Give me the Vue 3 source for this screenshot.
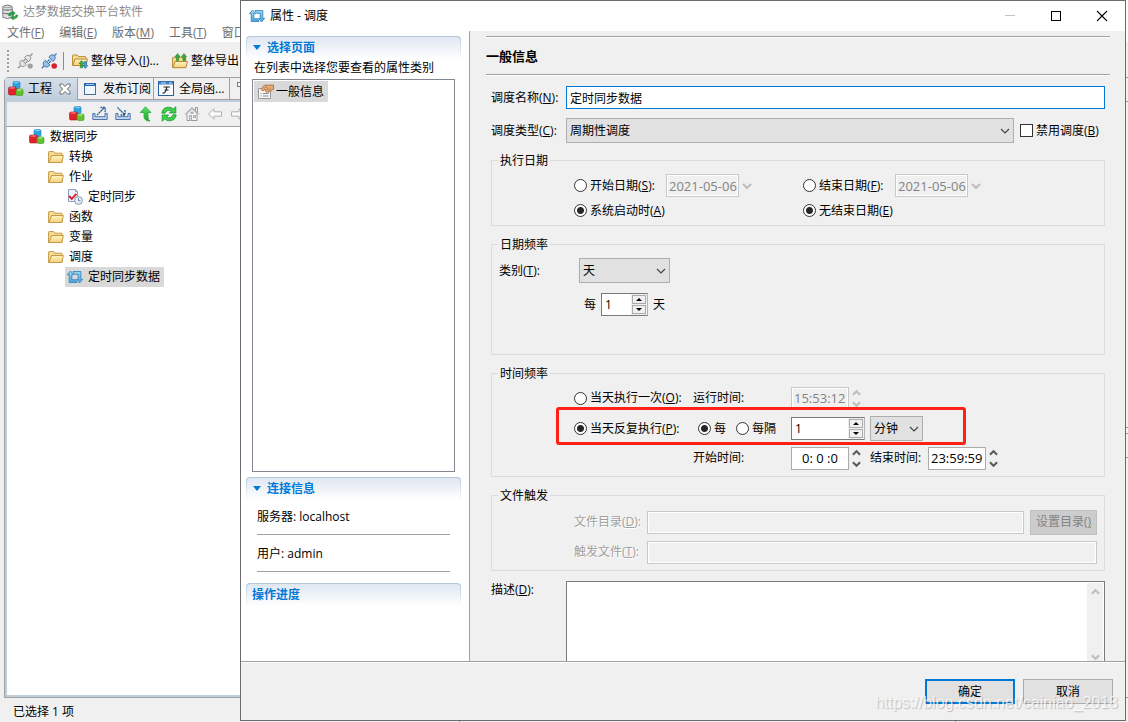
<script setup>
import { ref } from 'vue'

const menus = [
  ['文件', 'F'],
  ['编辑', 'E'],
  ['版本', 'M'],
  ['工具', 'T'],
  ['窗口', 'W'],
]

const tree = [
  { label: '数据同步', icon: 'cubes', level: 0 },
  { label: '转换', icon: 'folder', level: 1 },
  { label: '作业', icon: 'folder', level: 1 },
  { label: '定时同步', icon: 'job', level: 2 },
  { label: '函数', icon: 'folder', level: 1 },
  { label: '变量', icon: 'folder', level: 1 },
  { label: '调度', icon: 'folder', level: 1 },
  { label: '定时同步数据', icon: 'schedule', level: 2, selected: true },
]

const viewTools = [
  ['cubes', '工程'],
  ['export', '导出'],
  ['import', '导入'],
  ['up', '向上'],
  ['refresh', '刷新'],
  ['home', '主页'],
  ['back', '后退'],
  ['forward', '前进'],
]

const name = ref('定时同步数据')
const startMode = ref('boot')
const endMode = ref('never')
const runMode = ref('repeat')
const everyMode = ref('every')
const dayStep = ref('1')
const timeStep = ref('1')
</script>

<template>
  <svg class="defs" aria-hidden="true">
    <defs>
      <linearGradient id="gFolder" x1="0" y1="0" x2="0" y2="1">
        <stop offset="0" stop-color="#fdf3c4" /><stop offset="1" stop-color="#f2d27c" />
      </linearGradient>
      <linearGradient id="gBlue" x1="0" y1="0" x2="0" y2="1">
        <stop offset="0" stop-color="#9ad8f5" /><stop offset="1" stop-color="#4aa3dc" />
      </linearGradient>
      <linearGradient id="gGreen" x1="0" y1="0" x2="0" y2="1">
        <stop offset="0" stop-color="#63e06c" /><stop offset="1" stop-color="#17a52c" />
      </linearGradient>
    </defs>
    <symbol id="cubes" viewBox="0 0 16 16">
      <rect x="5" y=".5" width="7" height="7" rx="1.5" fill="#2ba3df" stroke="#1c7fb8" stroke-width=".6" />
      <path d="M5.6 2.1 7 .8h4L10 2.3z" fill="#7fd0f3" />
      <rect x=".5" y="6" width="8" height="8" rx="1.5" fill="#e3212b" stroke="#a8121c" stroke-width=".6" />
      <path d="M1.2 7.500 2.600 6.300h4.600L6.200 7.800z" fill="#f7777c" />
      <rect x="8" y="8" width="7" height="6.500" rx="1.500" fill="#62c22e" stroke="#3f8f1c" stroke-width=".6" />
      <path d="M8.700 9.500 9.900 8.300h4L12.900 9.700z" fill="#b0e886" />
    </symbol>
    <symbol id="folder" viewBox="0 0 16 16">
      <path d="M.6 13.500V3.200q0-.7.700-.7h4.200l1.300 1.700h6.600q.7 0 .7.700v8.600z" fill="#f6dc92" stroke="#c49a45" />
      <path d="M1 13.500 3.500 6.500h11.900l-1.700 7z" fill="url(#gFolder)" stroke="#c49a45" stroke-linejoin="round" />
    </symbol>
    <symbol id="job" viewBox="0 0 16 16">
      <path d="M1.500.5h7l2 2v10h-9z" fill="#eef3fb" stroke="#8b9cc0" />
      <path d="M8.500.5v2h2" fill="#cfd9ee" stroke="#8b9cc0" />
      <path d="M2 7 4.800 9.800 9.300 4.800" fill="none" stroke="#e01f26" stroke-width="2" />
      <circle cx="11.500" cy="11.500" r="3.900" fill="#e8eef8" stroke="#8498ba" />
      <path d="M11.500 9.200v2.500h2" fill="none" stroke="#6e83a8" />
    </symbol>
    <symbol id="schedule" viewBox="0 0 16 16">
      <path d="M3.500 2 6.700 5.700H4.800v5H8.500L10 13.500H2.200V5.700H.3z" fill="url(#gBlue)" stroke="#2a80bd" stroke-width=".8" stroke-linejoin="round" />
      <path d="M12.500 14 9.300 10.300h1.900v-5H7.500L6 2.500h7.800v7.800h1.900z" fill="url(#gBlue)" stroke="#2a80bd" stroke-width=".8" stroke-linejoin="round" />
    </symbol>
    <symbol id="export" viewBox="0 0 16 16">
      <path d="M3 7.500H.8v6h14.400v-6H13v3.200H3z" fill="#c3d6ee" stroke="#4d73ab" />
      <path d="M5 9 12.500 1.500M8.500 1.500h4.700v4.700" fill="none" stroke="#2b5f98" stroke-width="1.300" stroke-dasharray="2 .5" />
    </symbol>
    <symbol id="import" viewBox="0 0 16 16">
      <path d="M3 7.500H.8v6h14.400v-6H13v3.200H3z" fill="#c3d6ee" stroke="#4d73ab" />
      <path d="M2.500 1.500 9.500 8.500M10 4v5H5" fill="none" stroke="#2b5f98" stroke-width="1.300" stroke-dasharray="2 .5" />
    </symbol>
    <symbol id="up" viewBox="0 0 16 16">
      <path d="M7.500.8 13 6.500h-3v5q0 2 2 3.600-6-.2-6-4.600v-4H2.200z" fill="url(#gGreen)" stroke="#22ab38" stroke-width=".8" />
    </symbol>
    <symbol id="refresh" viewBox="0 0 16 16">
      <path d="M.8 7.200Q1.500 1.400 7.500 1.200q3 0 4.800 1.800L14.800.8V7H8.400l2-2Q8.600 3.700 6.600 4.500 5 5.200 4 7.200z" fill="#3ed04c" stroke="#16992b" stroke-width=".8" />
      <path d="M15.200 8.800Q14.500 14.600 8.500 14.800q-3 0-4.800-1.800L1.200 15.200V9h6.400l-2 2q1.800 1.300 3.800.5 1.600-.7 2.600-2.700z" fill="#3ed04c" stroke="#16992b" stroke-width=".8" />
    </symbol>
    <symbol id="home" viewBox="0 0 16 16">
      <path d="M3 7.500v7h10v-7L8 2.500z" fill="#f4f4f4" stroke="#9a9a9a" />
      <path d="M1 8.500 8 1.500l7 7M11.500 4.500V1.500h2v5" fill="none" stroke="#9a9a9a" />
      <path d="M5.500 14.500v-5h2v5M9.500 9.500h2v2h-2zM7 6h2v1.500H7z" fill="#ddd" stroke="#9a9a9a" stroke-width=".8" />
    </symbol>
    <symbol id="back" viewBox="0 0 16 16">
      <path d="M1.500 8 7 2.800v3h7.500v4.400H7v3z" fill="#fafafa" stroke="#b0b0b0" stroke-linejoin="round" />
    </symbol>
    <symbol id="forward" viewBox="0 0 16 16">
      <path d="M14.500 8 9 2.800v3H1.500v4.400H9v3z" fill="#fafafa" stroke="#b0b0b0" stroke-linejoin="round" />
    </symbol>
    <symbol id="plugOff" viewBox="0 0 16 16">
      <path d="M.8 15.200 3.500 12.500M12.500 3.500 15.600.5M6.500 8 8.500 6M8.500 10l2-2" stroke="#929292" stroke-width="1.300" />
      <path d="M3 8.500 4.800 7 9.300 11.500 7.800 13q-2.200 1.300-3.900-.2T3 8.500zM7.500 4.500 9.300 2.800q2.100-1.200 3.700.3t.2 3.900L11.700 8.700z" fill="#e4e4e4" stroke="#929292" />
      <circle cx="13.200" cy="13" r="2.600" fill="#a0a0a0" />
    </symbol>
    <symbol id="plugOn" viewBox="0 0 16 16">
      <path d="M.8 15.200 3 13M13 3 15.600.5M6.500 8.500l2-2M8 10l2-2" stroke="#4b79b8" stroke-width="1.400" />
      <path d="M2.500 9 4.300 7.300 9 12l-1.800 1.600q-2.200 1.300-3.900-.4T2.500 9zM7.800 4 9.600 2.300q2.100-1.200 3.800.4t.3 3.900L12 8.400z" fill="#9cbfe8" stroke="#4b79b8" />
      <circle cx="13.200" cy="13" r="2.800" fill="#d81e2c" />
    </symbol>
    <symbol id="folderIn" viewBox="0 0 16 16">
      <path d="M.6 12.500V2.700q0-.7.700-.7h3.800l1.300 1.600h6.800q.7 0 .7.700V12z" fill="#f6dc92" stroke="#b98b32" />
      <path d="M1 12.500 3 6h12.500l-1.700 6.500z" fill="url(#gFolder)" stroke="#b98b32" stroke-linejoin="round" />
      <path d="m9.500 7.500 2.500 3h-1.300v4.300H8.300v-4.300H7z" fill="#3fae3c" stroke="#1e7d25" stroke-width=".6" />
      <path d="m13.300 15.500 2.500-3h-1.300V8.500h-2.200v4H11z" fill="#4d9be0" stroke="#1d63ab" stroke-width=".6" />
    </symbol>
    <symbol id="folderOut" viewBox="0 0 16 16">
      <path d="M.6 14.500V5q0-.7.700-.7h12.400v10.200z" fill="#f6dc92" stroke="#b98b32" />
      <path d="M1 14.700 3 8.500h12.500l-1.700 6.200z" fill="url(#gFolder)" stroke="#b98b32" stroke-linejoin="round" />
      <path d="M5.500.6 8 3.800H6.600v3.700H4.400V3.800H3z" fill="#3fae3c" stroke="#1e7d25" stroke-width=".6" />
      <path d="m12 .6 2.500 3.200h-1.400v3.700h-2.200V3.800H9.500z" fill="#3fae3c" stroke="#1e7d25" stroke-width=".6" />
    </symbol>
    <symbol id="appIcon" viewBox="0 0 16 16">
      <path d="M.8 2.500Q5.500-.5 10.200 2.500v10.800q-4.700 2.500-9.400 0z" fill="#dfe1e2" stroke="#74797c" />
      <path d="M1 5.500q4.500 1.500 9 0M1 9q4.500 1.500 9 0" fill="none" stroke="#74797c" stroke-width="1.300" />
      <path d="M2 3.200q3.500 1 7 0" fill="none" stroke="#9da1a3" />
      <path d="M6.500 11.500q.3-3.200 4-3.200V6.800L13.300 9.300 10.500 11.700v-1.400q-2 0-2.200 1.800z" fill="#2aa845" stroke="#137b2a" stroke-width=".5" />
      <path d="M15.700 11q0 3.700-4.200 3.800V16L8.700 13.800 11.500 11.600v1.300q2.200 0 2.400-1.900z" fill="#2aa845" stroke="#137b2a" stroke-width=".5" />
    </symbol>
    <symbol id="windowIcon" viewBox="0 0 16 16">
      <rect x="2.500" y="2.500" width="11" height="11" fill="#eef7fd" stroke="#4a6d94" />
      <path d="M2 3.500h12" stroke="#2f68a8" stroke-width="3" />
      <path d="M4 3.500h8" stroke="#8fc2ec" />
    </symbol>
    <symbol id="fnIcon" viewBox="0 0 16 16">
      <rect x=".5" y=".5" width="15" height="14" fill="#f7fafd" stroke="#2d5f98" />
      <path d="M1 2h14" stroke="#4382c0" stroke-width="3" />
      <path d="M3 2h5M11 2h3" stroke="#bfe0f7" />
      <path d="M5.500 6h6.500M8.800 6Q8 12.500 4.500 12M6.500 9h4" fill="none" stroke="#222" stroke-width="1.200" />
    </symbol>
    <symbol id="tabX" viewBox="0 0 12 12">
      <path d="M1 1h2.600L6 3.500 8.400 1H11v2.200L8.400 6 11 8.800V11H8.400L6 8.500 3.600 11H1V8.800L3.600 6 1 3.200z" fill="#fff" stroke="#6b6b6b" />
    </symbol>
    <symbol id="hand" viewBox="0 0 16 16">
      <path d="M.5 4.500h12v10H.5z" fill="#f8f8f8" stroke="#9a9a9a" />
      <path d="M2.500 9.500h1M5 9.500h5.500M2.500 12h1M5 12h5.500" stroke="#7b8796" />
      <path d="M3.200 5.500 6.300 1.200H10L15.500 1v4.300L12.800 6.500 11 8.500 9.500 7.800 8.200 8.200 7 5.500 4.500 7z" fill="#e5ae79" stroke="#a5662f" stroke-width=".8" />
      <path d="M6.500 4.300 9 2.500M8.500 6 11 3.500M10.500 7l2-2.500" fill="none" stroke="#a5662f" stroke-width=".8" />
    </symbol>
    <symbol id="chevron" viewBox="0 0 10 10">
      <path d="M1 3 5 7 9 3" fill="none" stroke="currentColor" stroke-width="1.200" />
    </symbol>
    <symbol id="chevDown" viewBox="0 0 10 8">
      <path d="M1 2 5 6 9 2" fill="none" stroke="currentColor" stroke-width="2.200" />
    </symbol>
    <symbol id="chevUp" viewBox="0 0 10 8">
      <path d="M1 6 5 2 9 6" fill="none" stroke="currentColor" stroke-width="2.200" />
    </symbol>
  </svg>

  <div class="desktop">
    <div class="workbench">
      <header class="app-title">
        <svg class="ico"><use href="#appIcon" /></svg>
        <span>达梦数据交换平台软件</span>
      </header>
      <nav class="menubar">
        <button v-for="m in menus" :key="m[1]" type="button">{{ m[0] }}(<u>{{ m[1] }}</u>)</button>
      </nav>
      <div class="toolbar">
        <span class="grip"></span>
        <button type="button" aria-label="断开"><svg class="ico"><use href="#plugOff" /></svg></button>
        <button type="button" aria-label="连接"><svg class="ico"><use href="#plugOn" /></svg></button>
        <span class="sep"></span>
        <button type="button" class="wide"><svg class="ico"><use href="#folderIn" /></svg><span>整体导入(<u>I</u>)...</span></button>
        <button type="button"><svg class="ico"><use href="#folderOut" /></svg>整体导出</button>
      </div>

      <div class="panes">
        <section class="view">
          <div class="tabs">
            <button type="button" class="tab active">
              <svg class="ico"><use href="#cubes" /></svg>工程<svg class="close"><use href="#tabX" /></svg>
            </button>
            <button type="button" class="tab"><svg class="ico"><use href="#windowIcon" /></svg>发布订阅</button>
            <button type="button" class="tab"><svg class="ico"><use href="#fnIcon" /></svg>全局函...</button>
            <span class="view-menu"></span>
          </div>
          <div class="view-tools">
            <button v-for="t in viewTools" :key="t[0]" type="button" :aria-label="t[1]">
              <svg class="ico"><use :href="'#' + t[0]" /></svg>
            </button>
          </div>
          <ul class="tree">
            <li v-for="n in tree" :key="n.label" :class="['level' + n.level, { selected: n.selected }]">
              <span class="node"><svg class="ico"><use :href="'#' + n.icon" /></svg>{{ n.label }}</span>
            </li>
          </ul>
        </section>
        <div class="editors">
          <div class="editor-top"></div>
          <div class="editor-bottom"></div>
        </div>
      </div>

      <footer class="status">
        <span>已选择 1 项</span>
        <span></span>
        <span></span>
      </footer>
    </div>

    <div class="dialog" role="dialog" aria-labelledby="dlg-title">
      <header class="dlg-title">
        <svg class="ico"><use href="#schedule" /></svg>
        <span id="dlg-title">属性 - 调度</span>
        <div class="win-buttons">
          <button type="button" aria-label="最小化" disabled><svg viewBox="0 0 12 12"><path d="M1 5.500h10" stroke="#c4c4c4" /></svg></button>
          <button type="button" aria-label="最大化"><svg viewBox="0 0 12 12"><rect x="1.500" y="1.500" width="9" height="9" fill="none" stroke="#000" /></svg></button>
          <button type="button" aria-label="关闭"><svg viewBox="0 0 12 12"><path d="M1 1 11 11M11 1 1 11" stroke="#000" stroke-width="1.100" /></svg></button>
        </div>
      </header>

      <div class="dlg-body">
        <aside class="side">
          <h2><i class="tri"></i>选择页面</h2>
          <p class="hint">在列表中选择您要查看的属性类别</p>
          <ul class="pages">
            <li><svg class="ico"><use href="#hand" /></svg>一般信息</li>
          </ul>
          <h2><i class="tri"></i>连接信息</h2>
          <p class="info">服务器: localhost</p>
          <p class="info">用户: admin</p>
          <h2 class="last">操作进度</h2>
        </aside>

        <main class="page">
          <h1>一般信息</h1>
          <div class="form">
            <div class="line">
              <label for="f-name" class="cap">调度名称(<u>N</u>):</label>
              <input id="f-name" v-model="name" type="text" class="name-box" />
            </div>
            <div class="line type-line">
              <label for="f-type" class="cap">调度类型(<u>C</u>):</label>
              <span class="pick grow">
                <select id="f-type"><option>周期性调度</option></select>
                <svg><use href="#chevron" /></svg>
              </span>
              <label class="opt check"><input type="checkbox" /><span>禁用调度(<u>B</u>)</span></label>
            </div>

            <fieldset class="g-date">
              <legend>执行日期</legend>
              <div class="date-grid">
                <div class="cell">
                  <label class="opt"><input v-model="startMode" type="radio" value="date" name="start" /><span>开始日期(<u>S</u>):</span></label>
                  <input type="text" class="field off date" value="2021-05-06" aria-label="开始日期" disabled />
                  <svg class="drop"><use href="#chevDown" /></svg>
                </div>
                <div class="cell">
                  <label class="opt"><input v-model="endMode" type="radio" value="date" name="end" /><span>结束日期(<u>F</u>):</span></label>
                  <input type="text" class="field off date" value="2021-05-06" aria-label="结束日期" disabled />
                  <svg class="drop"><use href="#chevDown" /></svg>
                </div>
                <div class="cell">
                  <label class="opt"><input v-model="startMode" type="radio" value="boot" name="start" /><span>系统启动时(<u>A</u>)</span></label>
                </div>
                <div class="cell">
                  <label class="opt"><input v-model="endMode" type="radio" value="never" name="end" /><span>无结束日期(<u>E</u>)</span></label>
                </div>
              </div>
            </fieldset>

            <fieldset class="g-day">
              <legend>日期频率</legend>
              <div class="day-line">
                <label for="f-kind">类别(<u>T</u>):</label>
                <span class="pick kind">
                  <select id="f-kind"><option>天</option></select>
                  <svg><use href="#chevron" /></svg>
                </span>
              </div>
              <div class="step-line">
                <label for="f-step">每</label>
                <span class="spin">
                  <input id="f-step" v-model="dayStep" type="text" />
                  <span class="arrows"><button type="button" aria-label="增加"><i class="au"></i></button><button type="button" aria-label="减少"><i class="ad"></i></button></span>
                </span>
                <span>天</span>
              </div>
            </fieldset>

            <fieldset class="g-time">
              <legend>时间频率</legend>
              <div class="time-rows">
                <div class="time-row">
                  <label class="opt"><input v-model="runMode" type="radio" value="once" name="run" /><span>当天执行一次(<u>O</u>):</span></label>
                  <label for="f-run">运行时间:</label>
                  <span class="clock off">
                    <input id="f-run" type="text" class="field off" value="15:53:12" disabled />
                    <span class="updown"><svg><use href="#chevUp" /></svg><svg><use href="#chevDown" /></svg></span>
                  </span>
                </div>
                <div class="time-row">
                  <label class="opt"><input v-model="runMode" type="radio" value="repeat" name="run" /><span>当天反复执行(<u>P</u>):</span></label>
                  <span class="every">
                    <label class="opt"><input v-model="everyMode" type="radio" value="every" name="every" />每</label>
                    <label class="opt"><input v-model="everyMode" type="radio" value="gap" name="every" />每隔</label>
                  </span>
                  <span class="spin long">
                    <input v-model="timeStep" type="text" aria-label="间隔" />
                    <span class="arrows"><button type="button" aria-label="增加"><i class="au"></i></button><button type="button" aria-label="减少"><i class="ad"></i></button></span>
                  </span>
                  <span class="pick unit">
                    <select aria-label="单位"><option>分钟</option></select>
                    <svg><use href="#chevron" /></svg>
                  </span>
                  <span class="mark"></span>
                </div>
                <div class="time-row">
                  <span></span>
                  <label for="f-from">开始时间:</label>
                  <span class="clock">
                    <input id="f-from" type="text" class="field mid" value="0: 0 :0" />
                    <span class="updown"><svg><use href="#chevUp" /></svg><svg><use href="#chevDown" /></svg></span>
                  </span>
                  <span class="clock">
                    <label for="f-to">结束时间:</label>
                    <input id="f-to" type="text" class="field" value="23:59:59" />
                    <span class="updown"><svg><use href="#chevUp" /></svg><svg><use href="#chevDown" /></svg></span>
                  </span>
                </div>
              </div>
            </fieldset>

            <fieldset class="g-file">
              <legend>文件触发</legend>
              <div class="file-rows">
                <div class="file-row">
                  <label for="f-dir">文件目录(<u>D</u>):</label>
                  <input id="f-dir" type="text" class="field off" disabled />
                  <button type="button" class="set-dir" disabled>设置目录(<u>)</u></button>
                </div>
                <div class="file-row">
                  <label for="f-file">触发文件(<u>T</u>):</label>
                  <input id="f-file" type="text" class="field off" disabled />
                </div>
              </div>
            </fieldset>

            <div class="line desc">
              <label for="f-desc" class="cap">描述(<u>D</u>):</label>
              <div class="memo">
                <textarea id="f-desc"></textarea>
                <div class="bar"><svg><use href="#chevUp" /></svg><svg><use href="#chevDown" /></svg></div>
              </div>
            </div>
          </div>
        </main>
      </div>

      <footer class="dlg-foot">
        <button type="button" class="ok">确定</button>
        <button type="button">取消</button>
      </footer>
    </div>

    <div class="watermark">https://blog.csdn.net/cainiao_2018</div>
  </div>
</template>

<style>
html,
body {
  margin: 0;
  height: 100%;
  overflow: hidden;
}
</style>

<style scoped>
* {
  box-sizing: border-box;
}
.defs {
  position: absolute;
  width: 0;
  height: 0;
}
.desktop {
  position: relative;
  height: 100vh;
  overflow: hidden;
  background: #f0f0f0;
  color: #000;
  font: 12px/16px "Open Sans", "Noto Sans CJK SC", sans-serif;
  white-space: nowrap;
}
button,
input,
select,
textarea {
  font: inherit;
  color: inherit;
  margin: 0;
  border-radius: 0;
  outline: none;
}
button {
  padding: 0;
  border: 0;
  background: none;
}
.ico {
  width: 16px;
  height: 16px;
  flex: none;
}
h1,
h2,
p,
ul {
  margin: 0;
  padding: 0;
  list-style: none;
}

/* main window */
.workbench {
  display: flex;
  flex-direction: column;
  height: 100%;
}
.app-title {
  display: flex;
  align-items: center;
  gap: 5px;
  height: 24px;
  padding-left: 2px;
  background: #fff;
  color: #8c8c8c;
}
.menubar {
  display: flex;
  align-items: center;
  gap: 15px;
  height: 18px;
  padding-left: 7px;
  background: #fff;
  color: #6e6e6e;
}
.toolbar {
  display: flex;
  align-items: center;
  height: 35px;
  padding: 2px 0 0 7px;
}
.toolbar button {
  display: flex;
  align-items: center;
  gap: 3px;
  margin-right: 8px;
}
.toolbar .wide {
  width: 92px;
}
.grip {
  width: 1px;
  height: 22px;
  margin-right: 8px;
  border-left: 2px dotted #a0a0a0;
}
.sep {
  width: 1px;
  height: 18px;
  margin: 0 8px 0 -2px;
  background: #8c8c8c;
}
.panes {
  display: flex;
  flex: 1;
  min-height: 0;
  gap: 4px;
  padding-left: 4px;
}
.view {
  display: flex;
  flex-direction: column;
  width: 456px;
  border: 1px solid #a0a0a0;
  border-radius: 4px 4px 0 0;
}
.tabs {
  display: flex;
  height: 22px;
}
.tab {
  display: flex;
  align-items: center;
  gap: 5px;
  width: 76px;
  padding-left: 4px;
  border-right: 1px solid #a0a0a0;
  border-bottom: 1px solid #a0a0a0;
}
.tab.active {
  gap: 4px;
  width: 73px;
  padding-left: 3px;
  border-bottom: 0;
  background: linear-gradient(#d5dfea, #bfcddb);
}
.close {
  width: 12px;
  height: 12px;
  margin-left: 3px;
}
.view-menu {
  flex: 1;
  border-bottom: 1px solid #a0a0a0;
}
.view-menu::before {
  content: "";
  display: block;
  width: 8px;
  height: 3px;
  margin: 4px 0 0 7px;
  border: 1px solid #777;
  background: #fff;
}
.view-tools {
  display: flex;
  align-items: center;
  gap: 7px;
  height: 27px;
  padding-left: 62px;
  border: 2px solid #bfcddb;
  border-bottom: 1px solid #a0a0a0;
}
.view-tools button {
  display: flex;
}
.tree {
  flex: 1;
  border: 2px solid #bfcddb;
  border-top: 0;
  background: #fff;
}
.tree li {
  display: flex;
  height: 20px;
}
.tree .level0 {
  padding-left: 20px;
}
.tree .level1 {
  padding-left: 39px;
}
.tree .level2 {
  padding-left: 58px;
}
.node {
  display: flex;
  align-items: center;
  gap: 5px;
  padding: 0 4px 0 2px;
}
.selected .node {
  background: #d9d9d9;
}
.editors {
  display: flex;
  flex: 1;
  flex-direction: column;
  gap: 5px;
}
.editor-top,
.editor-bottom {
  border: 1px solid #a0a0a0;
  border-right: 0;
  background: linear-gradient(#f0f0f0 23px, #a0a0a0 23px, #a0a0a0 24px, #f0f0f0 24px);
}
.editor-top {
  flex: 1;
}
.editor-bottom {
  height: 265px;
}
.status {
  display: flex;
  height: 24px;
  padding-top: 6px;
}
.status span {
  flex: none;
  width: 496px;
  border-right: 1px solid #a0a0a0;
}
.status span:first-child {
  width: 460px;
  padding-left: 13px;
}

/* dialog window */
.dialog {
  position: absolute;
  inset: 0 2px 1px 240px;
  display: flex;
  flex-direction: column;
  border: 1px solid #6c6a6c;
  background: #f0f0f0;
}
.dlg-title {
  display: flex;
  align-items: center;
  gap: 5px;
  height: 30px;
  padding-left: 8px;
  background: #fff;
}
.win-buttons {
  display: flex;
  margin-left: auto;
}
.win-buttons button {
  display: flex;
  align-items: center;
  justify-content: center;
  width: 46px;
  height: 28px;
}
.win-buttons svg {
  width: 12px;
  height: 12px;
}
.dlg-body {
  display: flex;
  flex: 1;
  min-height: 0;
}
.side {
  display: flex;
  flex: none;
  flex-direction: column;
  width: 229px;
  padding: 5px 8px 0 5px;
  border-right: 1px solid #a0a0a0;
  background: #fff;
}
.side h2 {
  display: flex;
  flex: none;
  align-items: center;
  gap: 6px;
  height: 24px;
  padding: 0 0 1px 6px;
  border: 1px solid transparent;
  border-top-color: #b3c8dc;
  border-radius: 4px 4px 0 0;
  background: linear-gradient(#dfe7f2, #fff) padding-box, linear-gradient(#b3c8dc, #fff) border-box;
  color: #0078d7;
  font-size: 12px;
  font-weight: 700;
}
.tri {
  border: 4px solid transparent;
  border-top: 5px solid #0078d7;
  border-bottom: 0;
}
.hint {
  padding-left: 8px;
}
.pages {
  flex: 1;
  margin: 3px 6px 5px;
  padding: 1px;
  border: 1px solid #828790;
}
.pages li {
  display: inline-flex;
  align-items: center;
  gap: 2px;
  height: 21px;
  padding: 0 4px;
  background: #d9d9d9;
}
.info {
  height: 37px;
  margin: 0 11px;
  padding-top: 11px;
  border-bottom: 1px solid #a0a0a0;
}
.side h2 + .info {
  height: 34px;
  padding-top: 8px;
}
.side .last {
  margin: 11px 0 54px;
  padding-left: 5px;
}
.page {
  display: flex;
  flex: 1;
  flex-direction: column;
  min-width: 0;
  padding: 5px 15px 0 16px;
}
.page h1 {
  flex: none;
  height: 39px;
  border: solid #a0a0a0;
  border-width: 1px 0;
  box-shadow: 0 1px #fff, inset 0 1px #fff;
  font-size: 13px;
  font-weight: 700;
  line-height: 39px;
}
.form {
  display: flex;
  flex: 1;
  flex-direction: column;
  min-height: 0;
  padding: 11px 5px 0;
}
.line {
  display: flex;
  align-items: center;
}
.cap {
  flex: none;
  width: 75px;
}
.name-box {
  flex: 1;
  height: 23px;
  padding: 0 3px;
  border: 1px solid #0078d7;
  background: #fff;
}
.type-line {
  margin: 9px 0;
}
.pick {
  position: relative;
  display: block;
}
.pick select {
  display: block;
  width: 100%;
  height: 25px;
  padding: 0 3px;
  border: 1px solid #adadad;
  background: #e1e1e1;
  appearance: none;
}
.pick svg {
  position: absolute;
  top: 8px;
  right: 4px;
  width: 10px;
  height: 10px;
  color: #444;
  pointer-events: none;
}
.grow {
  flex: 1;
}
.opt {
  display: flex;
  align-items: center;
}
.opt input {
  flex: none;
  width: 13px;
  height: 13px;
  margin-right: 3px;
  border: 1px solid #333;
  background: #fff;
  appearance: none;
}
.opt input[type="radio"] {
  border-radius: 50%;
}
.opt input[type="radio"]:checked {
  background: radial-gradient(circle, #262626 3px, #fff 4px);
}
.opt input[type="checkbox"]:checked {
  background: #333;
}
.check {
  width: 85px;
  margin-left: 6px;
}
fieldset {
  flex: none;
  min-width: 0;
  margin: 0 0 10px;
  padding: 0;
  border: 1px solid #dcdcdc;
}
legend {
  height: 16px;
  margin-left: 6px;
  padding: 0 2px;
  line-height: 18px;
}
.g-date {
  height: 74px;
}
.g-day {
  height: 119px;
}
.g-time {
  height: 112px;
}
.g-file {
  height: 84px;
}
.field {
  width: 58px;
  height: 23px;
  padding: 0 0 0 2px;
  border: 1px solid #ababab;
  background: #fff;
  font-size: 13px;
}
.field.off {
  border-color: #c8c8c8;
  background: #f0f0f0;
  box-shadow: inset 0 0 0 1px #fff;
  color: #838383;
}
.field.date {
  width: 73px;
}
.field.mid {
  padding: 0;
  text-align: center;
}
.date-grid {
  display: grid;
  grid-template-columns: 229px 1fr;
  grid-auto-rows: 25px;
  padding: 5px 0 0 82px;
}
.cell {
  display: flex;
  align-items: center;
}
.cell .opt {
  min-width: 92px;
}
.drop {
  width: 10px;
  height: 8px;
  margin-left: 3px;
  color: #bdbdbd;
}
.day-line {
  display: flex;
  align-items: center;
  padding: 6px 0 0 7px;
}
.day-line label {
  width: 80px;
}
.kind {
  width: 91px;
}
.step-line {
  display: flex;
  align-items: center;
  gap: 5px;
  padding: 10px 0 0 92px;
}
.spin {
  display: flex;
  width: 47px;
  height: 23px;
  border: 1px solid #7a7a7a;
  border-right-color: #b5b5b5;
  background: #f0f0f0;
}
.spin input {
  flex: 1;
  width: 0;
  padding: 0 3px;
  border: 0;
  background: #fff;
}
.spin.long {
  width: 74px;
}
.arrows {
  display: flex;
  flex-direction: column;
  justify-content: space-between;
  padding: 1px;
}
.arrows button {
  display: flex;
  align-items: center;
  justify-content: center;
  width: 14px;
  height: 9px;
  border: 1px solid #ababab;
}
.au,
.ad {
  border: 3px solid transparent;
}
.au {
  border-top: 0;
  border-bottom-color: #000;
}
.ad {
  border-bottom: 0;
  border-top-color: #000;
}
.time-rows {
  display: grid;
  gap: 6px;
  padding: 5px 0 0 82px;
}
.time-row {
  position: relative;
  display: grid;
  grid-template-columns: 119px 98px 79px 1fr;
  align-items: center;
  height: 24px;
}
.every {
  display: flex;
  gap: 10px;
  padding-left: 5px;
}
.unit {
  width: 53px;
}
.clock {
  display: flex;
  align-items: center;
}
.clock label {
  width: 58px;
}
.updown {
  display: flex;
  flex-direction: column;
  gap: 3px;
  margin-left: 3px;
  color: #5a5a5a;
}
.clock.off .updown {
  color: #bdbdbd;
}
.updown svg {
  width: 9px;
  height: 8px;
}
.mark {
  position: absolute;
  top: -9px;
  left: -18px;
  width: 410px;
  height: 38px;
  border: 3px solid #ff2116;
  border-radius: 3px;
  pointer-events: none;
}
.file-rows {
  display: grid;
  gap: 6px;
  padding: 7px 7px 0 82px;
}
.file-row {
  display: flex;
  align-items: center;
  height: 24px;
  color: #a0a0a0;
}
.file-row label {
  flex: none;
  width: 73px;
  text-shadow: 1px 1px #fff;
}
.file-row .field {
  flex: 1;
}
.set-dir {
  width: 67px;
  height: 25px;
  margin-left: 6px;
  border: 1px solid #bfbfbf;
  background: #ccc;
  color: #838383;
}
.desc {
  flex: 1;
  align-items: flex-start;
  min-height: 0;
}
.desc .cap {
  padding-top: 1px;
}
.memo {
  display: flex;
  flex: 1;
  align-self: stretch;
  padding: 1px 1px 0;
  border: 1px solid #7a7a7a;
  border-bottom: 0;
  background: #fff;
}
.memo textarea {
  flex: 1;
  border: 0;
  background: #fff;
  resize: none;
}
.bar {
  display: flex;
  flex-direction: column;
  align-items: center;
  justify-content: space-between;
  width: 16px;
  padding: 5px 0 0;
  background: #f0f0f0;
  color: #bdbdbd;
}
.bar svg {
  width: 9px;
  height: 8px;
}
.dlg-foot {
  display: flex;
  flex: none;
  justify-content: flex-end;
  gap: 8px;
  height: 59px;
  padding: 17px 12px 0 0;
  border-top: 1px solid #a0a0a0;
  box-shadow: inset 0 1px #fff;
}
.dlg-foot button {
  width: 90px;
  height: 25px;
  border: 1px solid #adadad;
  background: #e1e1e1;
}
.dlg-foot .ok {
  border: 2px solid #0078d7;
}
.watermark {
  position: absolute;
  right: 10px;
  bottom: 10px;
  color: rgba(255, 255, 255, 0.75);
  font: 16px/18px "Liberation Sans", sans-serif;
  text-shadow: 1px 1px 1px rgba(0, 0, 0, 0.22);
  pointer-events: none;
}
</style>
